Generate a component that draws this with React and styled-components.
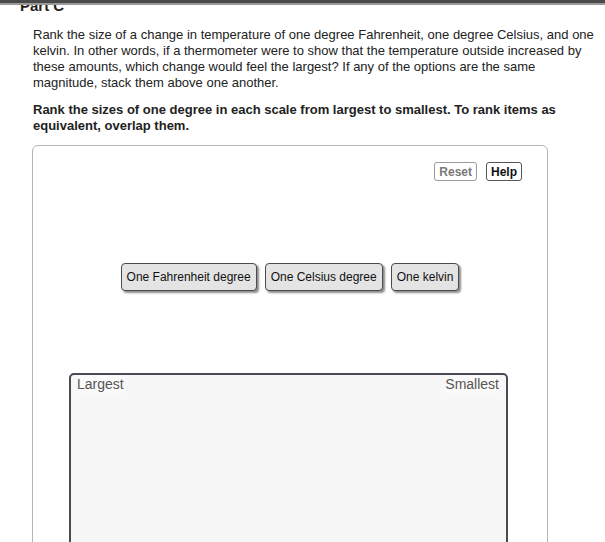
import React from "react";
import styled, { createGlobalStyle } from "styled-components";

const Global = createGlobalStyle`
  body {
    margin: 0;
    background: #fff;
    font-family: "Liberation Sans", Arial, sans-serif;
    color: #222;
  }
`;

const Page = styled.div`
  height: 542px;
  overflow: hidden;
`;

const TopBar = styled.div`
  position: relative;
  z-index: 2;
  height: 3px;
  background: #4a4a4a;
  border-bottom: 2px solid #9a9a9a;
`;

const PartTitle = styled.h2`
  margin: -8px 0 0 20px;
  font-size: 15px;
  line-height: 17px;
  font-weight: bold;
  color: #222;
`;

const Body = styled.div`
  padding: 0 0 0 33px;
  width: 564px;
`;

const Para = styled.p`
  margin: ${(p) => p.$mt || 0}px 0 0;
  font-size: 13px;
  line-height: 16px;
  font-weight: ${(p) => (p.$bold ? "bold" : "normal")};
  color: #222;
`;

const Panel = styled.div`
  margin: 11px 0 0 -1px;
  width: 516px;
  height: 420px;
  border: 1px solid #b5b5b5;
  border-radius: 6px;
  padding-top: 16px;
  box-sizing: border-box;
`;

const Tools = styled.div`
  display: flex;
  justify-content: flex-end;
  gap: 9px;
  padding-right: 25px;
`;

const ToolButton = styled.button`
  height: 19px;
  padding: 0 4px;
  font-family: "Liberation Sans", Arial, sans-serif;
  font-size: 12px;
  font-weight: bold;
  color: ${(p) => (p.$muted ? "#7a7a7a" : "#111")};
  background: #fff;
  border: 1px solid ${(p) => (p.$muted ? "#9a9a9a" : "#555")};
  border-radius: 3px;
`;

const Items = styled.div`
  display: flex;
  justify-content: center;
  gap: 8px;
  margin-top: 82px;
  padding-left: 0;
`;

const Item = styled.div`
  height: 26px;
  padding: 0 5px;
  display: flex;
  align-items: center;
  font-size: 12px;
  color: #111;
  background: #e4e4e4;
  border: 1px solid #4a4a50;
  border-radius: 4px;
  box-shadow: 2px 2px 2px rgba(0, 0, 0, 0.45);
`;

const RankBox = styled.div`
  margin: 82px 0 0 36px;
  width: 439px;
  height: 200px;
  box-sizing: border-box;
  background: #f7f7f7;
  border: 2px solid #4a4a55;
  border-radius: 5px;
  display: flex;
  justify-content: space-between;
  align-items: flex-start;
  padding: 0 7px 0 6px;
`;

const RankLabel = styled.span`
  font-size: 14px;
  line-height: 18px;
  color: #555;
  background: #fafafa;
`;

export default function App() {
  return (
    <Page>
      <Global />
      <TopBar />
      <PartTitle>Part C</PartTitle>
      <Body>
        <Para $mt={13}>
          Rank the size of a change in temperature of one degree Fahrenheit, one degree Celsius, and one
          kelvin. In other words, if a thermometer were to show that the temperature outside increased by
          these amounts, which change would feel the largest? If any of the options are the same
          magnitude, stack them above one another.
        </Para>
        <Para $bold $mt={11}>
          Rank the sizes of one degree in each scale from largest to smallest. To rank items as
          equivalent, overlap them.
        </Para>
        <Panel>
          <Tools>
            <ToolButton $muted>Reset</ToolButton>
            <ToolButton>Help</ToolButton>
          </Tools>
          <Items>
            <Item>One Fahrenheit degree</Item>
            <Item>One Celsius degree</Item>
            <Item>One kelvin</Item>
          </Items>
          <RankBox>
            <RankLabel>Largest</RankLabel>
            <RankLabel>Smallest</RankLabel>
          </RankBox>
        </Panel>
      </Body>
    </Page>
  );
}
